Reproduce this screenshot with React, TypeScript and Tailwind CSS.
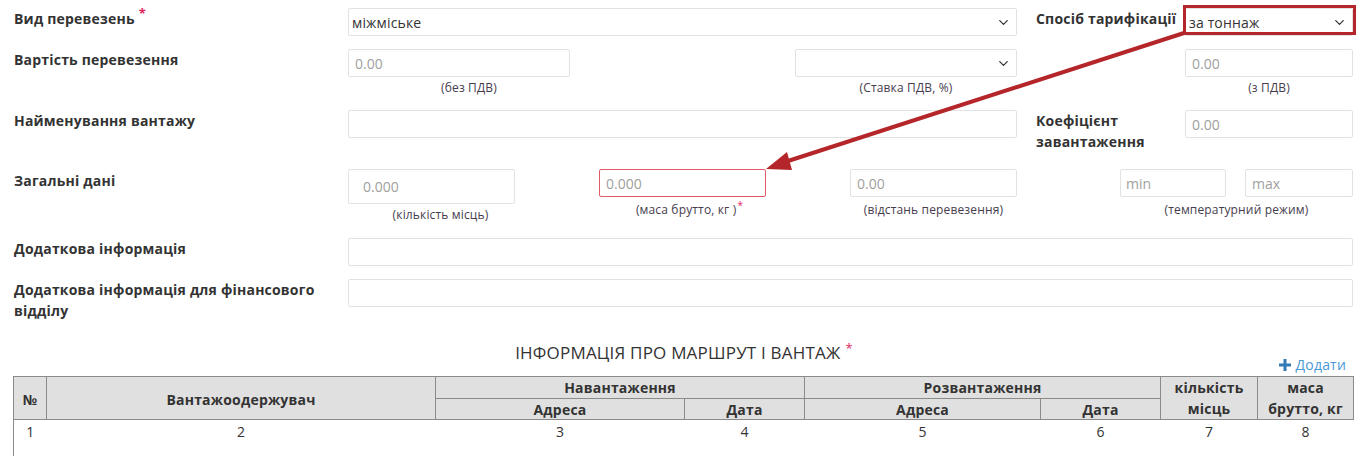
import { ChevronDown } from "lucide-react";

const label = "text-[14px] leading-[21px] font-bold text-[#333] tracking-[0.2px]";
const caption = "text-[12px] leading-[18px] text-[#463c4e] text-center tracking-[0.15px]";
const input =
  "h-[28px] border border-[#e2e2e2] rounded-[2px] bg-white text-[14px] text-[#333] placeholder:text-[#a0a0a0] outline-none";
const th = "border border-[#8a8a8a] tracking-[0.2px]";

function Select({ value, className = "" }: { value?: string; className?: string }) {
  return (
    <div className={`relative h-[28px] border border-[#e2e2e2] rounded-[2px] bg-white flex items-center ${className}`}>
      <span className="pl-[3px] text-[14px] text-[#333] tracking-[0.15px]">{value}</span>
      <ChevronDown size={15} strokeWidth={2} className="absolute right-[5px] top-[6px] text-[#333]" />
    </div>
  );
}

function Field({
  placeholder,
  width,
  note,
  noteClass = "",
}: {
  placeholder?: string;
  width: string;
  note?: React.ReactNode;
  noteClass?: string;
}) {
  return (
    <div className={`flex flex-col ${width}`}>
      <input className={`${input} px-[6px]`} placeholder={placeholder} />
      {note && <div className={`${caption} mt-[2px] ${noteClass}`}>{note}</div>}
    </div>
  );
}

export default function App() {
  return (
    <div className="relative w-[1368px] h-[456px] overflow-hidden bg-white" style={{ fontFamily: '"Open Sans", "Noto Sans", sans-serif' }}>
      <div className="px-[14px] pt-[8px]">
        {/* Вид перевезень */}
        <div className="flex">
          <div className={`${label} w-[334px]`}>
            Вид перевезень<sup className="text-[#e0245e] text-[13px] ml-[4px]">*</sup>
          </div>
          <Select value="міжміське" className="w-[669px]" />
          <div className={`${label} w-[149px] ml-[19px] whitespace-nowrap`}>Спосіб тарифікації</div>
          <div className="relative w-[168px]">
            <Select value="за тоннаж" className="w-[168px]" />
            <div className="absolute -top-[3px] -left-[2px] -right-[3px] bottom-[1px] border-[3px] border-[#b5262b] pointer-events-none" />
          </div>
        </div>

        {/* Вартість перевезення */}
        <div className="flex mt-[13px]">
          <div className={`${label} w-[334px]`}>Вартість перевезення</div>
          <div className="w-[669px] flex justify-between">
            <Field placeholder="0.00" width="w-[222px]" note="(без ПДВ)" noteClass="pl-[20px]" />
            <div className="flex flex-col w-[222px]">
              <Select className="w-[222px]" />
              <div className={`${caption} mt-[2px]`}>(Ставка ПДВ, %)</div>
            </div>
          </div>
          <div className="w-[149px] ml-[19px]" />
          <Field placeholder="0.00" width="w-[168px]" note="(з ПДВ)" />
        </div>

        {/* Найменування вантажу */}
        <div className="flex mt-[13px]">
          <div className={`${label} w-[334px]`}>Найменування вантажу</div>
          <input className={`${input} w-[669px] px-[6px]`} />
          <div className={`${label} w-[149px] ml-[19px]`}>Коефіцієнт завантаження</div>
          <input className={`${input} w-[168px] px-[6px]`} placeholder="0.00" />
        </div>

        {/* Загальні дані */}
        <div className="flex mt-[17px]">
          <div className={`${label} w-[334px] pt-[1px]`}>Загальні дані</div>
          <div className="flex w-[1005px]">
            <div className="flex flex-col w-[167px]">
              <input className={`${input} h-[35px] px-[14px]`} placeholder="0.000" />
              <div className={`${caption} mt-[2px] pl-[18px]`}>(кількість місць)</div>
            </div>
            <div className="flex flex-col w-[167px] ml-[84px]">
              <input
                className="h-[28px] border border-[#e05a68] rounded-[2px] bg-white text-[14px] px-[6px] placeholder:text-[#a0a0a0] outline-none"
                placeholder="0.000"
              />
              <div className={`${caption} mt-[4px] pl-[14px]`}>
                (маса брутто, кг )<sup className="text-[#e0245e] text-[10px] ml-[1px]">*</sup>
              </div>
            </div>
            <div className="flex flex-col w-[167px] ml-[84px]">
              <input className={`${input} px-[6px]`} placeholder="0.00" />
              <div className={`${caption} mt-[4px]`}>(відстань перевезення)</div>
            </div>
            <div className="flex flex-col w-[233px] ml-[103px]">
              <div className="flex justify-between">
                <input className={`${input} w-[106px] px-[5px]`} placeholder="min" />
                <input className={`${input} w-[108px] px-[6px]`} placeholder="max" />
              </div>
              <div className={`${caption} mt-[4px]`}>(температурний режим)</div>
            </div>
          </div>
        </div>

        {/* Додаткова інформація */}
        <div className="flex mt-[14px]">
          <div className={`${label} w-[334px]`}>Додаткова інформація</div>
          <input className={`${input} w-[1005px]`} />
        </div>
        <div className="flex mt-[13px]">
          <div className={`${label} w-[334px] pr-[12px]`}>Додаткова інформація для фінансового відділу</div>
          <input className={`${input} w-[1005px] h-[28px]`} />
        </div>

        {/* Маршрут */}
        <div className="grid grid-cols-[1fr_auto_1fr] h-[35px] mt-[20px]">
          <div />
          <div className="text-[17px] leading-[24px] text-[#333] tracking-[0.2px]">
            ІНФОРМАЦІЯ ПРО МАРШРУТ І ВАНТАЖ<sup className="text-[#e0245e] text-[13px] ml-[5px]">*</sup>
          </div>
          <div className="justify-self-end mt-[13px] mr-[8px] flex items-center gap-[4px] text-[14px] leading-[20px] text-[#4b98d6] tracking-[0.2px]">
            <svg width="12" height="12" viewBox="0 0 12 12" className="text-[#337ab7]">
              <path d="M4.5 0h3v4.5H12v3H7.5V12h-3V7.5H0v-3h4.5z" fill="currentColor" />
            </svg>
            Додати
          </div>
        </div>

        <table className="-ml-[1px] w-[1341px] table-fixed border-collapse text-[14px] text-[#333]">
          <colgroup>
            <col className="w-[33px]" />
            <col className="w-[389px]" />
            <col className="w-[249px]" />
            <col className="w-[120px]" />
            <col className="w-[236px]" />
            <col className="w-[120px]" />
            <col className="w-[97px]" />
            <col className="w-[96px]" />
          </colgroup>
          <thead className="bg-[#e0e0e0] font-bold">
            <tr className="h-[22px]">
              <th rowSpan={2} className={`${th} leading-[21px] pt-[2px]`}>№</th>
              <th rowSpan={2} className={`${th} leading-[21px] pt-[2px]`}>Вантажоодержувач</th>
              <th colSpan={2} className={`${th} leading-[20px]`}>Навантаження</th>
              <th colSpan={2} className={`${th} leading-[20px]`}>Розвантаження</th>
              <th rowSpan={2} className={`${th} leading-[21px]`}>
                кількість
                <br />
                місць
              </th>
              <th rowSpan={2} className={`${th} leading-[21px]`}>
                маса
                <br />
                брутто, кг
              </th>
            </tr>
            <tr className="h-[21px]">
              <th className={`${th} leading-[19px]`}>Адреса</th>
              <th className={`${th} leading-[19px]`}>Дата</th>
              <th className={`${th} leading-[19px]`}>Адреса</th>
              <th className={`${th} leading-[19px]`}>Дата</th>
            </tr>
          </thead>
          <tbody>
            <tr className="h-[40px] align-top text-center">
              {[1, 2, 3, 4, 5, 6, 7, 8].map((n) => (
                <td key={n} className={`pt-[2px] leading-[20px] ${n === 1 ? "border-l border-[#8a8a8a]" : ""}`}>
                  {n}
                </td>
              ))}
            </tr>
          </tbody>
        </table>
      </div>

      {/* стрілка-анотація */}
      <svg className="absolute inset-0 pointer-events-none" width="1368" height="456">
        <line x1="1184" y1="33" x2="788" y2="161" stroke="#b5262b" strokeWidth="4" />
        <polygon points="766,169 787,152 792,170" fill="#b5262b" />
      </svg>
    </div>
  );
}
